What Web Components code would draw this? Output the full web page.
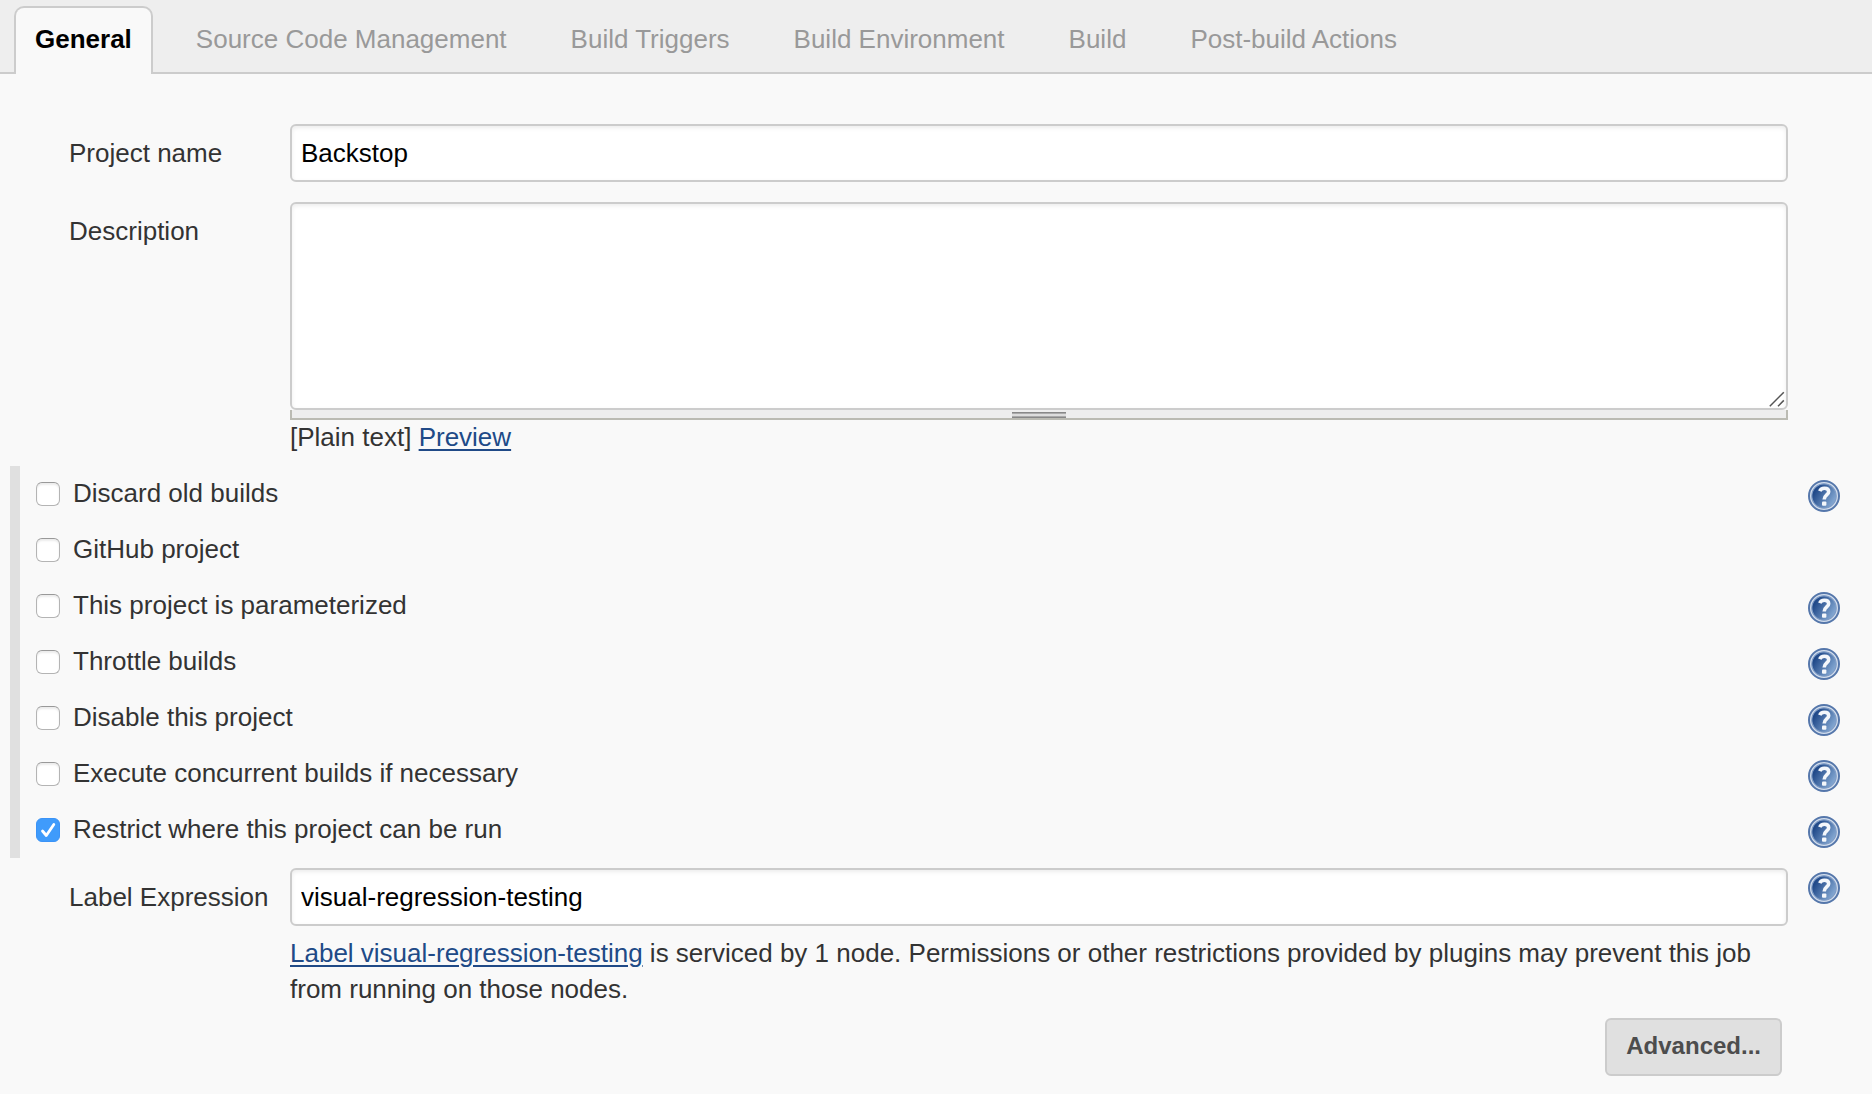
<!DOCTYPE html>
<html lang="en">
<head>
<meta charset="utf-8">
<title>Backstop Config</title>
<style>
html { background: #f9f9f9; }
body { margin: 0; font: 26px/36px "Liberation Sans", Arial, sans-serif; color: #333; }
</style>
</head>
<body>
<config-page></config-page>
<script>
const define = (name, html, init) => {
  const template = document.createElement('template');
  template.innerHTML = html;
  customElements.define(name, class extends HTMLElement {
    connectedCallback() {
      if (this.shadowRoot) return;
      this.attachShadow({ mode: 'open' }).append(template.content.cloneNode(true));
      if (init) init(this, this.shadowRoot);
    }
  });
};

define('config-tab', `
<style>
:host { display: block; }
a { display: block; box-sizing: border-box; height: 68px; padding: 13px 19px 0; border: 2px solid transparent;
  border-bottom: 0; border-radius: 10px 10px 0 0; color: #999; text-decoration: none; white-space: nowrap; }
:host([active]) a { background: #f9f9f9; border-color: #ccc; color: #000; font-weight: bold; }
</style>
<a href="#"><slot></slot></a>`);

define('config-tabs', `
<style>
:host { display: block; background: linear-gradient(#ccc, #ccc) bottom / 100% 2px no-repeat #eee; }
nav { display: flex; gap: 22px; padding: 6px 14px 0; }
</style>
<nav aria-label="Sections"><slot></slot></nav>`);

define('help-button', `
<style>
:host { display: block; width: 32px; height: 32px; }
button { display: block; width: 32px; height: 32px; padding: 0; border: 0; background: none; }
svg { display: block; }
</style>
<button type="button" aria-label="Help">
<svg width="32" height="32" viewBox="0 0 32 32">
<defs><linearGradient id="g" x1="0" y1="0.2" x2="1" y2="0.8"><stop offset="0.15" stop-color="#214a8a"/><stop offset="1" stop-color="#8fb2da"/></linearGradient></defs>
<circle cx="16" cy="16" r="15" fill="#d3deed" stroke="#5577ab" stroke-width="2"/>
<circle cx="16" cy="16" r="12.2" fill="url(#g)" stroke="#7f9cc6" stroke-width="1.2"/>
<path d="M11.8 11.2C12.6 8.9 14.2 8.2 16.4 8.2C19 8.2 20.7 9.6 20.7 11.7C20.7 14.9 16.2 15.1 16.2 19.4" fill="none" stroke="#f4f7fb" stroke-width="3.6"/>
<rect x="14" y="21.4" width="4.4" height="4.4" rx="1" fill="#f4f7fb"/>
</svg></button>`);

define('form-row', `
<style>
:host { display: grid; grid-template-columns: 221px minmax(0, 1fr) 32px; padding: 0 32px 0 69px; }
.label { padding-top: 11px; white-space: nowrap; }
.field { margin-right: 20px; }
.help { padding-top: 4px; }
.control { position: relative; }
input, textarea { display: block; box-sizing: border-box; width: 100%; margin: 0; padding: 0 9px; border: 2px solid #ccc;
  border-radius: 6px; background: #fff; box-shadow: inset 0 2px 4px rgba(0,0,0,.075); color: #000; font: inherit; outline: 0; }
input { height: 58px; }
textarea { height: 208px; }
textarea::-webkit-resizer { background: transparent; }
.corner { position: absolute; right: 3px; bottom: 3px; pointer-events: none; }
:host(:not([multiline])) .corner { display: none; }
</style>
<label class="label" for="field"></label>
<div class="field"><div class="control"><svg class="corner" width="16" height="16" viewBox="0 0 16 16"><path d="M.8 15.2L14.8 1.2M9 15.2L14.8 9.4" fill="none" stroke="#555" stroke-width="1.5"/></svg></div><slot></slot></div>
<div class="help"><slot name="help"></slot></div>`, (host, root) => {
  root.querySelector('.label').textContent = host.getAttribute('label');
  const field = document.createElement(host.hasAttribute('multiline') ? 'textarea' : 'input');
  field.id = 'field';
  field.value = host.getAttribute('value') || '';
  root.querySelector('.control').prepend(field);
});

define('resize-grip', `
<style>
:host { display: flex; justify-content: center; box-sizing: border-box; height: 10px; padding-top: 2px;
  border: 2px solid #bbbbb3; border-top: 0; background: #eee; }
svg { display: block; }
</style>
<svg width="54" height="6"><path d="M0 .5H54M0 5.5H54" stroke="#888"/><path d="M0 1.5H54M0 4.5H54" stroke="#aaa"/><path d="M0 3H54" stroke="#ddd" stroke-width="2"/></svg>`);

define('option-row', `
<style>
:host { display: flex; justify-content: space-between; height: 56px; padding: 0 32px 0 16px; }
label { display: flex; gap: 13px; padding-top: 9px; }
input { appearance: none; flex: none; box-sizing: border-box; width: 24px; height: 24px; margin: 7px 0 0; border: 1px solid #b4b4b4;
  border-top-color: #999; border-radius: 6px; background: #fff; box-shadow: inset 0 2px 2px rgba(0,0,0,.08); }
.box { display: grid; align-self: start; }
.box > * { grid-area: 1 / 1; }
svg { margin-top: 7px; pointer-events: none; visibility: hidden; }
input:checked { border-color: #3b93f7; background: #3f9bfb; box-shadow: none; }
input:checked + svg { visibility: visible; }
help-button { margin-top: 14px; }
</style>
<label><span class="box"><input type="checkbox"><svg width="24" height="24" viewBox="0 0 24 24"><path d="M6.5 13L10.3 17.5L17.8 6.5" fill="none" stroke="#fff" stroke-width="2.8" stroke-linecap="round" stroke-linejoin="round"/></svg></span><span><slot></slot></span></label>
<help-button></help-button>`, (host, root) => {
  root.querySelector('input').checked = host.hasAttribute('checked');
  if (host.hasAttribute('no-help')) root.querySelector('help-button').remove();
});

define('option-list', `
<style>
:host { display: block; margin-left: 10px; border-left: 10px solid #e0e0e0; }
</style>
<slot></slot>`);

define('action-button', `
<style>
:host { display: block; }
button { display: block; height: 58px; padding: 0 19px 2px; border: 2px solid #ccc; border-radius: 6px; background: #e0e0e0;
  color: #4d4d4d; font: bold 24px "Liberation Sans", Arial, sans-serif; }
</style>
<button type="button"><slot></slot></button>`);

define('config-page', `
<style>
:host { display: block; }
form { padding-top: 50px; }
.description { margin-top: 20px; }
a { color: #204a87; text-decoration: underline; text-decoration-thickness: 2px; text-underline-offset: 3px; }
.format { margin-top: -1px; }
option-list { margin-top: 11px; }
.labels { margin-top: 10px; }
.note { padding-top: 9px; }
.actions { display: flex; justify-content: flex-end; padding: 11px 90px 18px; }
</style>
<config-tabs>
<config-tab active>General</config-tab><config-tab>Source Code Management</config-tab><config-tab>Build Triggers</config-tab><config-tab>Build Environment</config-tab><config-tab>Build</config-tab><config-tab>Post-build Actions</config-tab>
</config-tabs>
<form>
<form-row label="Project name" value="Backstop"></form-row>
<form-row class="description" label="Description" multiline><resize-grip></resize-grip><div class="format">[Plain text] <a href="#">Preview</a></div></form-row>
<option-list>
<option-row>Discard old builds</option-row>
<option-row no-help>GitHub project</option-row>
<option-row>This project is parameterized</option-row>
<option-row>Throttle builds</option-row>
<option-row>Disable this project</option-row>
<option-row>Execute concurrent builds if necessary</option-row>
<option-row checked>Restrict where this project can be run</option-row>
</option-list>
<form-row class="labels" label="Label Expression" value="visual-regression-testing"><help-button slot="help"></help-button><div class="note"><a href="#">Label visual-regression-testing</a> is serviced by 1 node. Permissions or other restrictions provided by plugins may prevent this job from running on those nodes.</div></form-row>
<div class="actions"><action-button>Advanced...</action-button></div>
</form>`);
</script>
</body>
</html>
